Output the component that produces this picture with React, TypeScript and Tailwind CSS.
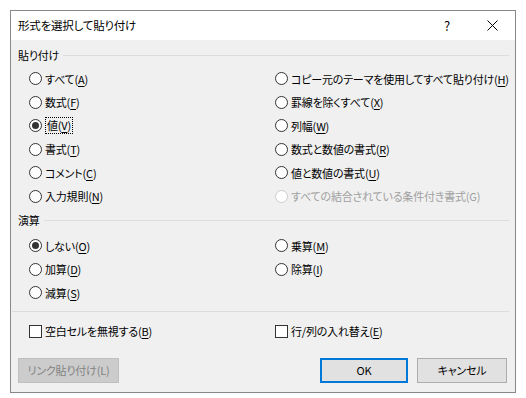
import React from "react";

type Opt = { label: string; key?: string; checked?: boolean; disabled?: boolean; focus?: boolean };

const pasteLeft: Opt[] = [
  { label: "すべて", key: "A" },
  { label: "数式", key: "F" },
  { label: "値", key: "V", checked: true, focus: true },
  { label: "書式", key: "T" },
  { label: "コメント", key: "C" },
  { label: "入力規則", key: "N" },
];

const pasteRight: Opt[] = [
  { label: "コピー元のテーマを使用してすべて貼り付け", key: "H" },
  { label: "罫線を除くすべて", key: "X" },
  { label: "列幅", key: "W" },
  { label: "数式と数値の書式", key: "R" },
  { label: "値と数値の書式", key: "U" },
  { label: "すべての結合されている条件付き書式(G)", disabled: true },
];

const opLeft: Opt[] = [
  { label: "しない", key: "O", checked: true },
  { label: "加算", key: "D" },
  { label: "減算", key: "S" },
];

const opRight: Opt[] = [
  { label: "乗算", key: "M" },
  { label: "除算", key: "I" },
];

function Label({ label, access }: { label: string; access?: string }) {
  if (!access) return <span>{label}</span>;
  return (
    <span>
      {label}(<span className="underline underline-offset-[1.5px]">{access}</span>)
    </span>
  );
}

function Radio({ opt }: { opt: Opt }) {
  return (
    <div className={`flex h-[23.5px] items-center gap-[3px] ${opt.disabled ? "text-[#a0a0a0]" : "text-black"}`}>
      <span
        className={`flex h-[13px] w-[13px] items-center justify-center rounded-full border bg-white ${
          opt.disabled ? "border-[#cccccc]" : "border-[#333333]"
        }`}
      >
        {opt.checked && <span className="h-[7px] w-[7px] rounded-full bg-[#333333]" />}
      </span>
      <span className={opt.focus ? "border border-dotted border-black px-[1px] leading-[15px]" : ""}>
        <Label label={opt.label} access={opt.key} />
      </span>
    </div>
  );
}

function Checkbox({ label, access }: { label: string; access: string }) {
  return (
    <div className="flex h-[24px] items-center gap-[3px]">
      <span className="h-[13px] w-[13px] border border-[#333333] bg-white" />
      <Label label={label} access={access} />
    </div>
  );
}

function GroupHeader({ title }: { title: string }) {
  return (
    <div className="flex h-[24px] items-center pl-[7px] pr-[6px]">
      <span>{title}</span>
      <span className="ml-[4px] h-px flex-1 bg-[#dcdcdc]" />
    </div>
  );
}

export default function App() {
  return (
    <div
      className="h-[398px] w-[526px] bg-white pl-[10px] pt-[10px] text-[11px] tracking-[-0.2px] text-black [font-feature-settings:'palt']"
      style={{ fontFamily: "'Noto Sans CJK JP', 'Noto Sans', sans-serif" }}
    >
      <div className="flex h-[383px] w-[506px] flex-col border border-[#888888] bg-[#f0f0f0]">
        <div className="flex h-[29px] items-center bg-white">
          <span className="flex-1 pl-[7px] text-[11.5px]">形式を選択して貼り付け</span>
          <span className="flex h-full w-[44px] items-center justify-center text-[13px]">?</span>
          <span className="flex h-full w-[46px] items-center justify-center">
            <svg width="11" height="11" viewBox="0 0 11 11">
              <path d="M0.5 0.5 L10.5 10.5 M10.5 0.5 L0.5 10.5" stroke="#000" strokeWidth="1" />
            </svg>
          </span>
        </div>

        <div className="flex flex-1 flex-col pt-[3px]">
          <GroupHeader title="貼り付け" />
          <div className="grid grid-cols-[246px_1fr] pl-[18px]">
            <div className="flex flex-col">
              {pasteLeft.map((o) => (
                <Radio key={o.label} opt={o} />
              ))}
            </div>
            <div className="flex flex-col">
              {pasteRight.map((o) => (
                <Radio key={o.label} opt={o} />
              ))}
            </div>
          </div>

          <GroupHeader title="演算" />
          <div className="mt-[2px] grid grid-cols-[246px_1fr] pl-[18px]">
            <div className="flex flex-col">
              {opLeft.map((o) => (
                <Radio key={o.label} opt={o} />
              ))}
            </div>
            <div className="flex flex-col">
              {opRight.map((o) => (
                <Radio key={o.label} opt={o} />
              ))}
            </div>
          </div>

          <div className="ml-[1px] mr-[6px] mt-[6px] h-px bg-[#dcdcdc]" />

          <div className="mt-[7.5px] grid grid-cols-[246px_1fr] pl-[18px]">
            <Checkbox label="空白セルを無視する" access="B" />
            <Checkbox label="行/列の入れ替え" access="E" />
          </div>

          <div className="mt-[15px] flex h-[25px] pl-[7px] pr-[8px]">
            <button className="w-[101px] border border-[#bfbfbf] bg-[#cccccc] text-[#838383]">
              リンク貼り付け(L)
            </button>
            <div className="flex-1" />
            <button className="w-[88px] border-2 border-[#0078d7] bg-[#e1e1e1]">OK</button>
            <button className="ml-[9px] w-[90px] border border-[#adadad] bg-[#e1e1e1]">キャンセル</button>
          </div>
        </div>
      </div>
    </div>
  );
}
